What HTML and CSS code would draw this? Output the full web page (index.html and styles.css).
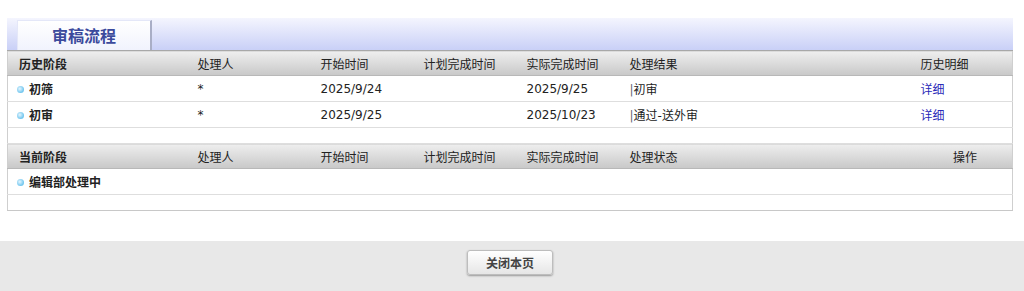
FILE: index.html
```html
<!DOCTYPE html>
<html>
<head>
  <meta charset="utf-8">
  <link rel="stylesheet" href="styles.css">
</head>
<body>
  <div class="panel">
    <div class="tabbar">
      <div class="tab">审稿流程</div>
    </div>

    <table class="flow">
      <colgroup>
        <col style="width:179px"><col style="width:123px"><col style="width:103px">
        <col style="width:103px"><col style="width:103px"><col style="width:291px"><col>
      </colgroup>
      <tr class="head">
        <th class="strong">历史阶段</th>
        <th>处理人</th>
        <th>开始时间</th>
        <th>计划完成时间</th>
        <th>实际完成时间</th>
        <th>处理结果</th>
        <th>历史明细</th>
      </tr>
      <tr>
        <td class="stage"><span class="dot"></span>初筛</td>
        <td>*</td>
        <td>2025/9/24</td>
        <td></td>
        <td>2025/9/25</td>
        <td><span class="bar">|</span>初审</td>
        <td><a href="#" class="link">详细</a></td>
      </tr>
      <tr>
        <td class="stage"><span class="dot"></span>初审</td>
        <td>*</td>
        <td>2025/9/25</td>
        <td></td>
        <td>2025/10/23</td>
        <td><span class="bar">|</span>通过-送外审</td>
        <td><a href="#" class="link">详细</a></td>
      </tr>
      <tr class="spacer"><td colspan="7"></td></tr>
      <tr class="head">
        <th class="strong">当前阶段</th>
        <th>处理人</th>
        <th>开始时间</th>
        <th>计划完成时间</th>
        <th>实际完成时间</th>
        <th>处理状态</th>
        <th class="op">操作</th>
      </tr>
      <tr>
        <td class="stage" colspan="7"><span class="dot"></span>编辑部处理中</td>
      </tr>
      <tr class="spacer last"><td colspan="7"></td></tr>
    </table>
  </div>

  <div class="footer">
    <button type="button" class="btn">关闭本页</button>
  </div>
</body>
</html>
```

FILE: styles.css
```css
body {
    margin: 0;
    font-family: "DejaVu Sans", "Noto Sans CJK SC", sans-serif;
    font-size: 12px;
    color: #222;
    background: #fff;
}

.panel {
    margin: 18px 11px 0 7px;
}

.tabbar {
    height: 32px;
    background: linear-gradient(to bottom, #f4f5fe, #c9d0f7);
    display: flex;
    align-items: flex-end;
    padding-left: 10px;
}

.tab {
    width: 135px;
    height: 30px;
    box-sizing: border-box;
    background: linear-gradient(to bottom, #ffffff, #f1f3fd);
    border-top: 1px solid #e4e7f8;
    border-left: 1px solid #e4e7f8;
    border-right: 2px solid #a9aec6;
    color: #3b4a9c;
    font-family: "Noto Sans CJK SC", sans-serif;
    font-size: 16px;
    font-weight: bold;
    text-align: center;
    line-height: 29px;
}

.flow {
    width: 1006px;
    border-collapse: collapse;
    table-layout: fixed;
    border-left: 1px solid #cfcfcf;
    border-right: 1px solid #cfcfcf;
}

.flow th,
.flow td {
    height: 25px;
    padding: 0 0 0 11px;
    text-align: left;
    white-space: nowrap;
    border-bottom: 1px solid #dedede;
}

.flow th {
    font-weight: normal;
    background: linear-gradient(to bottom, #eeeeee, #c8c8c8);
    border-top: 1px solid #a8a8a8;
    border-bottom: 1px solid #b8b8b8;
    height: 24px;
}

.flow th.strong {
    font-weight: bold;
    font-family: "Noto Sans CJK SC", sans-serif;
}

.flow th.op {
    text-align: right;
    padding-right: 35px;
}

.stage {
    font-weight: bold;
    font-family: "Noto Sans CJK SC", sans-serif;
    padding-left: 9px !important;
}

.dot {
    display: inline-block;
    width: 7px;
    height: 7px;
    border-radius: 50%;
    background: radial-gradient(circle at 40% 40%, #e6f6ff, #6cc4ee 70%);
    margin-right: 5px;
    vertical-align: 1px;
}

.bar {
    color: #667;
}

.link {
    color: #2a2ab8;
    text-decoration: none;
}

.spacer td {
    height: 15px;
}

.spacer.last td {
    height: 15px;
    border-bottom: 1px solid #c8c8c8;
}

.footer {
    margin-top: 30px;
    height: 51px;
    background: #e8e8e8;
    display: flex;
    justify-content: center;
    padding-top: 9px;
    box-sizing: border-box;
}

.btn {
    width: 86px;
    height: 25px;
    margin-left: -4px;
    border: 1px solid #bdbdbd;
    border-radius: 3px;
    background: linear-gradient(to bottom, #ffffff, #e6e6e6);
    box-shadow: 0 1px 2px rgba(0, 0, 0, 0.35);
    font-family: "Noto Sans CJK SC", sans-serif;
    font-size: 12px;
    font-weight: bold;
    color: #444;
    cursor: pointer;
}
```
